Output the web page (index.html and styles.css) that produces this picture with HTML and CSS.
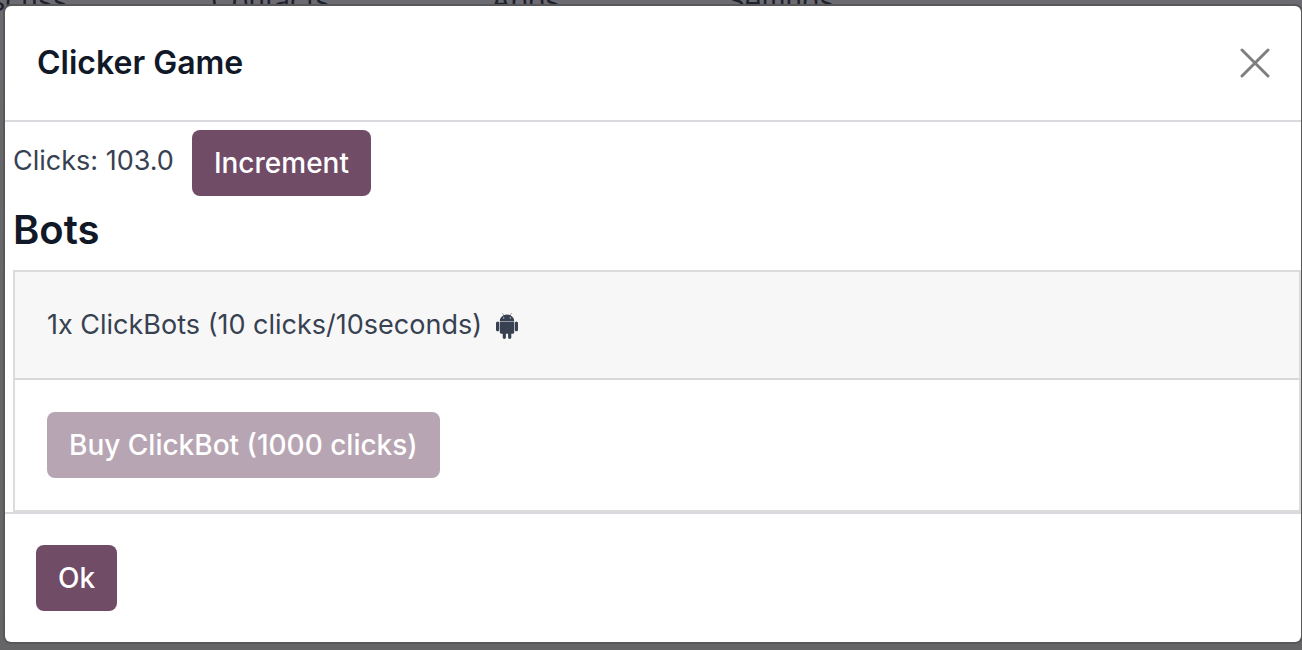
FILE: index.html
```html
<!DOCTYPE html>
<html lang="en">
<head>
<meta charset="utf-8">
<meta name="viewport" content="width=device-width, initial-scale=1">
<title>Clicker Game</title>
<link rel="stylesheet" href="styles.css">
</head>
<body>
<nav class="apps" aria-hidden="true">
  <span class="app">Discuss</span>
  <span class="app">Contacts</span>
  <span class="app">Apps</span>
  <span class="app">Settings</span>
</nav>
<main class="modal" role="dialog" aria-labelledby="title">
  <header class="modal-header">
    <h1 class="modal-title" id="title">Clicker Game</h1>
    <button class="close" type="button" aria-label="Close">
      <svg class="close-icon" viewBox="0 0 30 30"><path d="M2 2 28 28M28 2 2 28"/></svg>
    </button>
  </header>
  <section class="modal-body">
    <div class="score">
      <span class="clicks">Clicks: 103.0</span>
      <button class="btn" type="button">Increment</button>
    </div>
    <h2 class="section-title">Bots</h2>
    <div class="card">
      <div class="card-header">
        <span>1x ClickBots (10 clicks/10seconds)</span>
        <svg class="android" viewBox="0 0 1408 1792" aria-hidden="true"><path d="M493 483q16 0 27.500-11.500t11.500-27.500-11.500-27.500-27.500-11.500-27 11.500-11 27.500 11 27.500 27 11.500zm422 0q16 0 27-11.500t11-27.500-11-27.500-27-11.500-27.500 11.500-11.500 27.500 11.500 27.500 27.500 11.500zM103 667q42 0 72 30t30 72v430q0 43-29.500 73t-72.500 30-73-30-30-73v-430q0-42 30-72t73-30zm1060 19v666q0 46-32 78t-77 32h-75v227q0 43-30 73t-73 30-73-30-30-73v-227h-138v227q0 43-30 73t-73 30q-42 0-72-30t-30-73l-1-227h-74q-46 0-78-32t-32-78v-666h918zm-232-405q107 55 171 153.500t64 215.500h-925q0-117 64-215.500t172-153.500l-71-131q-7-13 5-20 13-6 20 6l72 132q95-42 201-42t201 42l72-132q7-12 20-6 12 7 5 20zM1408 769v430q0 43-30 73t-73 30q-42 0-72-30t-30-73v-430q0-43 30-72.500t72-29.500q43 0 73 29.500t30 72.500z"/></svg>
      </div>
      <div class="card-body">
        <button class="btn" type="button" disabled>Buy ClickBot (1000 clicks)</button>
      </div>
    </div>
  </section>
  <footer class="modal-footer">
    <button class="btn" type="button">Ok</button>
  </footer>
</main>
</body>
</html>
```
FILE: styles.css
```css
* {
  box-sizing: border-box;
}

body {
  margin: 0;
  min-height: 100vh;
  padding: 6px 1px 8px 5px;
  overflow: hidden;
  background: linear-gradient(#6d6b72, #69696b 20%, #656466);
  color: #374151;
  font: 27px/42px Inter, "Noto Sans", sans-serif;
}

/* Home menu labels, partly covered by the dialog */
.apps {
  position: absolute;
  top: -20px;
  left: -112px;
  display: flex;
}

.app {
  width: 255px;
  text-align: center;
  color: #1d222d;
  font-size: 28px;
}

.modal {
  position: relative;
  background: #fff;
  border-radius: 6px;
  box-shadow: 0 0 0 2px #58575a;
}

.modal-header {
  display: flex;
  align-items: center;
  justify-content: space-between;
  padding: 32px 31px 32px 32px;
  border-bottom: 2px solid #d8dadd;
}

.modal-title {
  margin: 0;
  color: #111827;
  font-size: 32px;
  font-weight: 600;
  line-height: 50px;
}

.close {
  display: flex;
  padding: 0;
  border: 0;
  background: none;
}

.close-icon {
  width: 30px;
  height: 30px;
  fill: none;
  stroke: #7f7f7f;
  stroke-width: 3;
  stroke-linecap: round;
}

.modal-body {
  padding: 8px 0 0 8px;
}

.score {
  display: flex;
  gap: 18px;
}

.clicks {
  padding-top: 10px;
}

.btn {
  padding: 12px 22px;
  border: 0;
  border-radius: 8px;
  background: #704c67;
  color: #fff;
  font: inherit;
  font-size: 28px;
  font-weight: 500;
}

.btn:disabled {
  background: #b8a5b3;
}

.section-title {
  margin: 9px 0 15px;
  color: #111827;
  font-size: 40px;
  font-weight: 600;
  line-height: 50px;
}

.card {
  border: 2px solid #dcdcdd;
}

.card-header {
  display: flex;
  align-items: center;
  gap: 14px;
  padding: 32px;
  border-bottom: 2px solid #d8d8d8;
  background: #f7f7f7;
}

.android {
  width: 22px;
  height: 28px;
  fill: #374151;
}

.card-body {
  padding: 32px;
}

.modal-footer {
  padding: 31px;
  border-top: 2px solid #d8dadd;
}
```
